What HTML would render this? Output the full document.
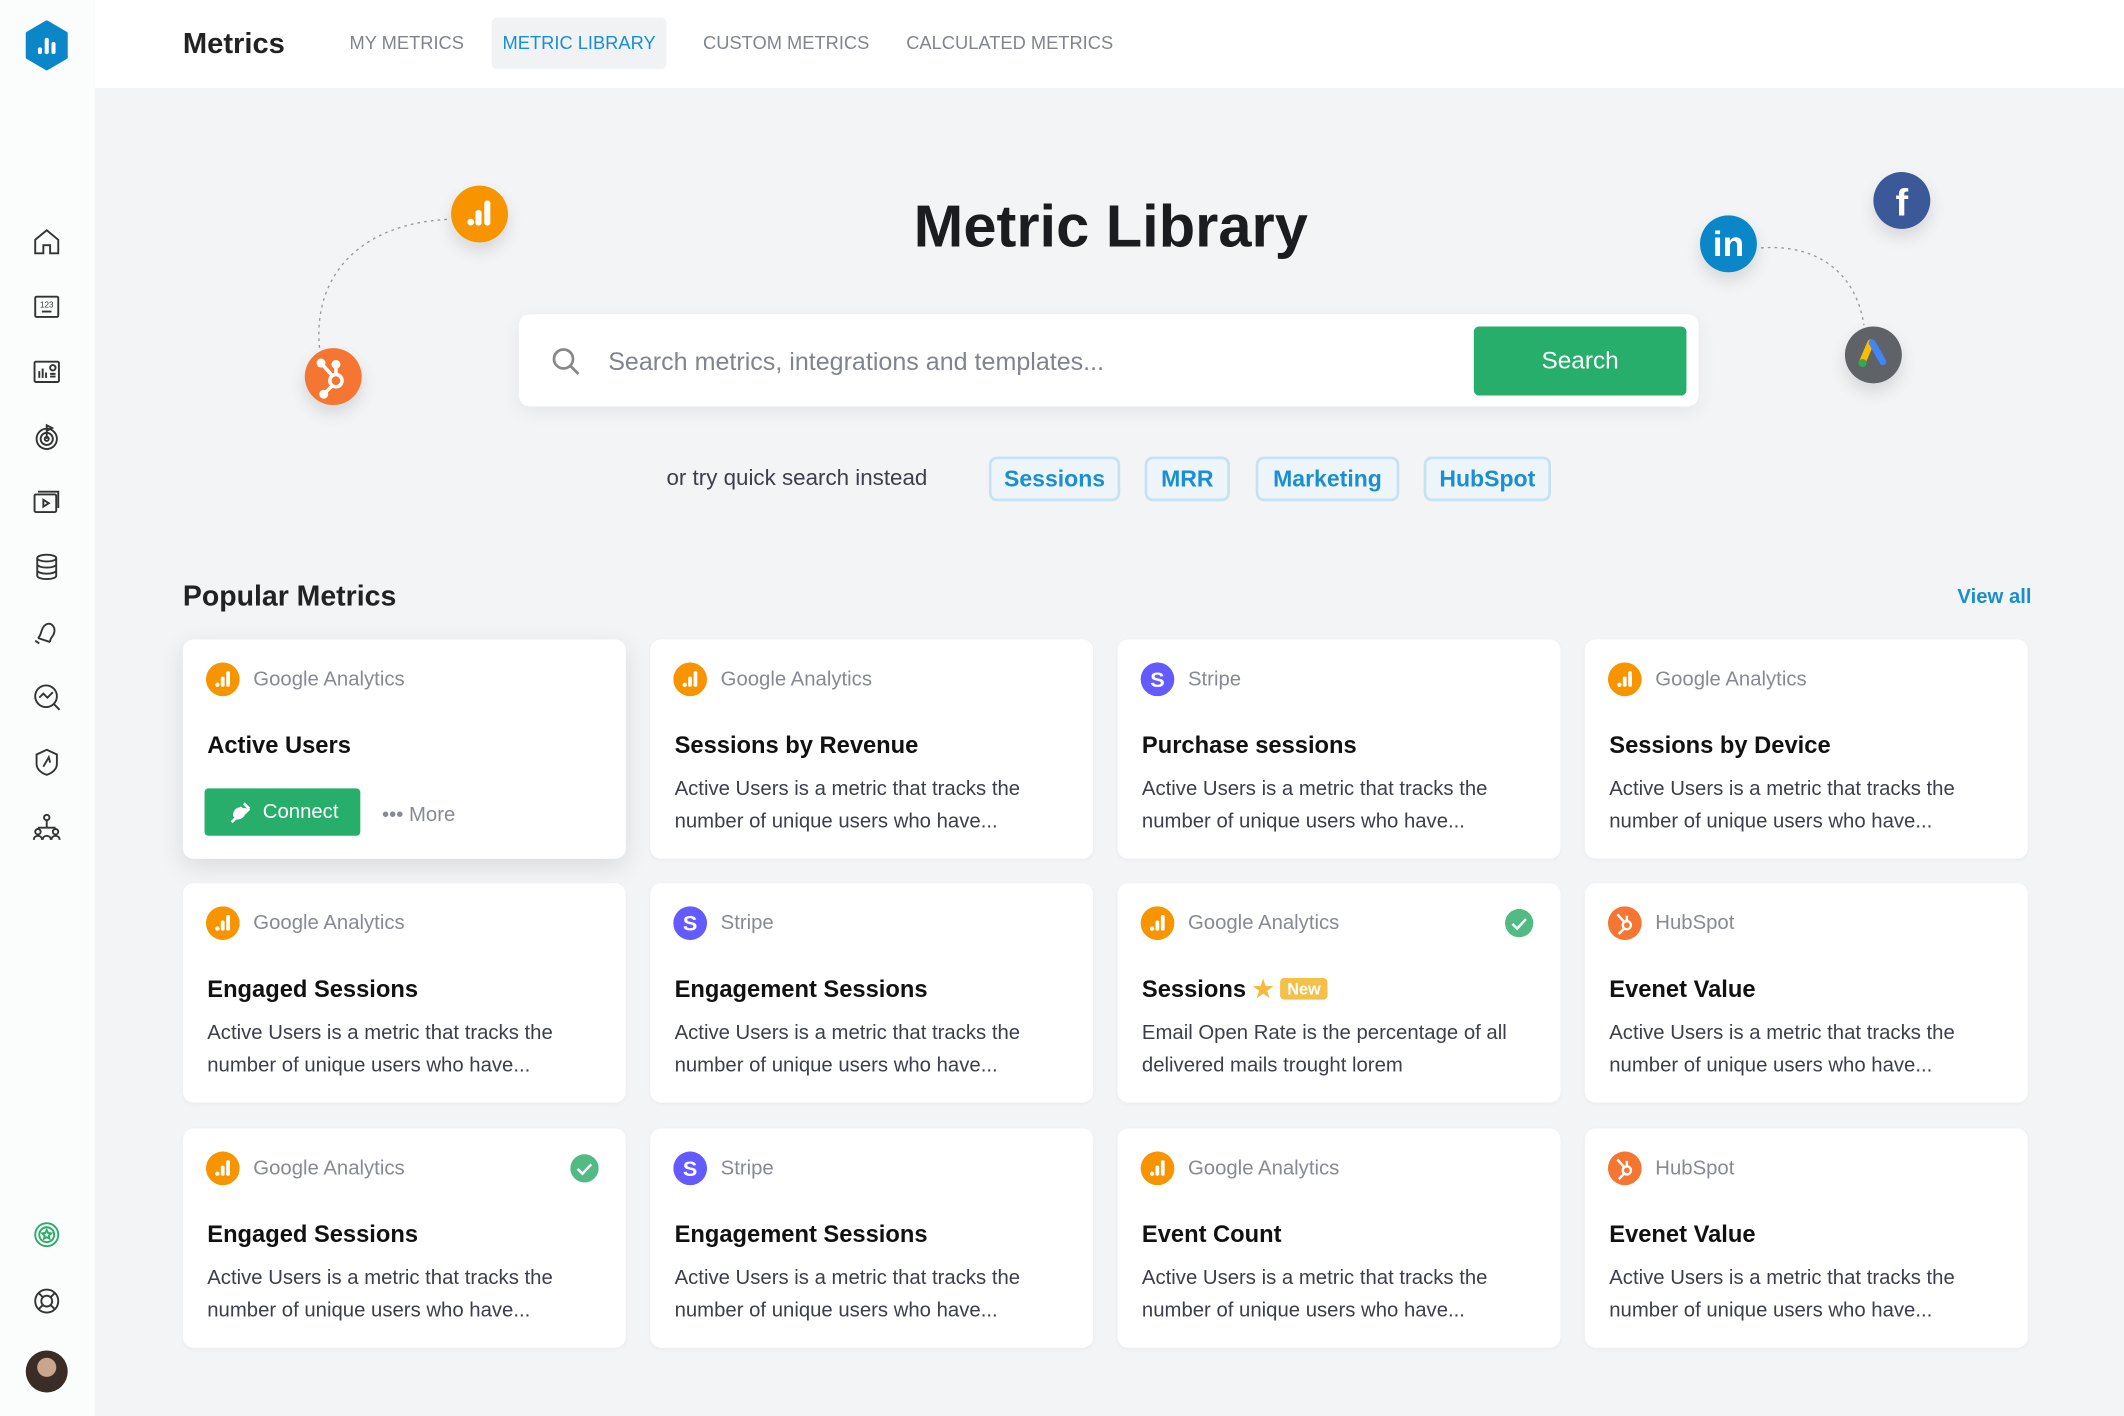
<!DOCTYPE html>
<html><head><meta charset="utf-8"><style>
*{box-sizing:border-box;margin:0;padding:0}
html,body{width:2124px;height:1416px;overflow:hidden;background:#fff}
#w{width:1568px;height:1046px;transform:scale(1.35459);transform-origin:0 0;position:relative;font-family:"Liberation Sans",Arial,sans-serif;background:#f3f4f6}
.abs{position:absolute}
#side{left:0;top:0;width:70px;height:1046px;background:#fbfcfc}
#head{left:70px;top:0;width:1498px;height:65px;background:#fff}
.tab{position:absolute;top:24px;font-size:13.5px;color:#80848c;letter-spacing:0}
.ic{position:absolute;left:24px;width:21px;height:21px}
.card{position:absolute;width:327px;height:162px;background:#fff;border-radius:8px;box-shadow:0 1px 3px rgba(0,0,0,.04)}
.src{position:absolute;left:52px;top:21px;font-size:15px;color:#878a92}
.ttl{position:absolute;left:18px;top:68px;font-size:17.5px;font-weight:bold;color:#111}
.dsc{position:absolute;left:18px;top:99px;font-size:15px;color:#3c3f4a;line-height:24px}
.lg{position:absolute;left:17px;top:17px;width:25px;height:25px;border-radius:50%}
.chip{position:absolute;top:337px;height:33px;border:2px solid #c6e2f1;background:#eef5fa;border-radius:6px;color:#1a8fd0;font-weight:bold;font-size:17px;line-height:29px;text-align:center}
.chk{position:absolute;right:20px;top:19px;width:21px;height:21px;border-radius:50%;background:#52bb84}
</style></head><body><div id="w">
<div id="side" class="abs">
<svg class="abs" style="left:18px;top:15px" width="33" height="37" viewBox="0 0 33 37"><path d="M16.5 1 L31 9.5 V27.5 L16.5 36 L2 27.5 V9.5Z" fill="#0a86c9" stroke="#0a86c9" stroke-linejoin="round" stroke-width="2"/><rect x="10" y="20" width="3" height="5" rx="1.5" fill="#fff"/><rect x="15" y="13" width="3" height="12" rx="1.5" fill="#fff"/><rect x="20" y="16" width="3" height="9" rx="1.5" fill="#fff"/></svg>
<svg class="ic" style="top:168px" viewBox="0 0 21 21" fill="none" stroke="#333" stroke-width="1.4"><path d="M2 9 L10.5 2 L19 9 V19 H13 V13 H8 V19 H2Z"/></svg>
<svg class="ic" style="top:216px" viewBox="0 0 21 21" fill="none" stroke="#333" stroke-width="1.4"><rect x="2" y="3" width="17" height="15" rx="1"/><text x="10.5" y="11" font-size="6" text-anchor="middle" fill="#333" stroke="none" font-family="Liberation Sans">123</text><path d="M7 14h7"/></svg>
<svg class="ic" style="top:264px" viewBox="0 0 21 21" fill="none" stroke="#333" stroke-width="1.4"><rect x="1.5" y="3" width="18" height="15" rx="1"/><path d="M5 15V10M7.5 15V8M10 15V11M13 14h4M13 12h4"/><circle cx="15" cy="7.5" r="2"/></svg>
<svg class="ic" style="top:312px" viewBox="0 0 21 21" fill="none" stroke="#333" stroke-width="1.4"><circle cx="10.5" cy="12" r="7.5"/><circle cx="10.5" cy="12" r="4.5"/><circle cx="10.5" cy="12" r="1.5"/><path d="M10.5 12V2l4 2-4 2"/></svg>
<svg class="ic" style="top:360px" viewBox="0 0 21 21" fill="none" stroke="#333" stroke-width="1.4"><rect x="1.5" y="5" width="16" height="13" rx="1"/><path d="M4 3h15v12"/><path d="M8 9l4 2.5-4 2.5z"/></svg>
<svg class="ic" style="top:408px" viewBox="0 0 21 21" fill="none" stroke="#333" stroke-width="1.4"><ellipse cx="10.5" cy="4" rx="7" ry="2.5"/><path d="M3.5 4v13c0 1.4 3 2.5 7 2.5s7-1.1 7-2.5V4M3.5 8.5c0 1.4 3 2.5 7 2.5s7-1.1 7-2.5M3.5 13c0 1.4 3 2.5 7 2.5s7-1.1 7-2.5"/></svg>
<svg class="ic" style="top:456px" viewBox="0 0 21 21" fill="none" stroke="#333" stroke-width="1.4"><path d="M4 15c3-2 2-8 6-10s7 2 6 6-3 3-3 7M4 15l9 3M2 17l3 2"/></svg>
<svg class="ic" style="top:504px" viewBox="0 0 21 21" fill="none" stroke="#333" stroke-width="1.4"><circle cx="10" cy="10" r="8"/><path d="M15.5 15.5L20 20M5 11l3-3 3 3 4-4"/></svg>
<svg class="ic" style="top:552px" viewBox="0 0 21 21" fill="none" stroke="#333" stroke-width="1.4"><path d="M10.5 1.5L18 5v7c0 4-4 7-7.5 8C7 19 3 16 3 12V5z"/><path d="M8 14l4-7 1 4"/></svg>
<svg class="ic" style="top:600px" viewBox="0 0 21 21" fill="none" stroke="#333" stroke-width="1.4"><circle cx="10.5" cy="3.5" r="2"/><circle cx="4" cy="14" r="2"/><circle cx="17" cy="14" r="2"/><path d="M10.5 6v5M4 11h13M1 20c0-2 1.5-3 3-3s3 1 3 3M14 20c0-2 1.5-3 3-3s3 1 3 3M7.5 20c0-2 1.5-3 3-3s3 1 3 3"/></svg>
<svg class="ic" style="top:901px" viewBox="0 0 21 21" fill="none" stroke="#27ae6a" stroke-width="1.4"><circle cx="10.5" cy="10.5" r="8.5"/><circle cx="10.5" cy="10.5" r="5.5"/><path d="M10.5 7l1 2.2 2.3.3-1.7 1.6.4 2.3-2-1.1-2 1.1.4-2.3-1.7-1.6 2.3-.3z"/></svg>
<svg class="ic" style="top:950px" viewBox="0 0 21 21" fill="none" stroke="#333" stroke-width="1.4"><circle cx="10.5" cy="10.5" r="8.5"/><circle cx="10.5" cy="10.5" r="4"/><path d="M4.5 4.5l3 3M16.5 4.5l-3 3M4.5 16.5l3-3M16.5 16.5l-3-3"/></svg>
<div class="abs" style="left:19px;top:997px;width:31px;height:31px;border-radius:50%;background:radial-gradient(circle at 50% 40%,#c9a58e 0 28%,#3a2c26 30% 100%)"></div>
</div>
<div id="head" class="abs">
<div class="abs" style="left:65px;top:20px;font-size:21.5px;color:#222;font-weight:600">Metrics</div>
<div class="tab" style="left:188px">MY METRICS</div>
<div class="abs" style="left:293px;top:13px;width:129px;height:38px;background:#f0f2f4;border-radius:4px"></div>
<div class="tab" style="left:301px;color:#1a8fd0">METRIC LIBRARY</div>
<div class="tab" style="left:449px">CUSTOM METRICS</div>
<div class="tab" style="left:599px">CALCULATED METRICS</div>
</div>
<svg class="abs" style="left:0;top:0" width="1568" height="400" fill="none"><path d="M330 162 C270 165 230 200 236 258" stroke="#999" stroke-dasharray="2 3"/><path d="M1300 183 C1340 180 1370 200 1376 240" stroke="#999" stroke-dasharray="2 3"/></svg>
<div class="abs" style="left:333px;top:137px;width:42px;height:42px;border-radius:50%;background:#f79400;box-shadow:0 6px 12px rgba(0,0,0,.12)"><svg width="42" height="42"><circle cx="14.5" cy="27" r="2.5" fill="#fff"/><rect x="18" y="18" width="4.5" height="11.5" rx="2" fill="#fff"/><rect x="24.5" y="11" width="4.5" height="18.5" rx="2" fill="#fff"/></svg></div>
<div class="abs" style="left:225px;top:257px;width:42px;height:42px;border-radius:50%;background:#f47632;box-shadow:0 6px 12px rgba(0,0,0,.12)"><svg width="42" height="42" fill="none" stroke="#fff" stroke-width="2.6"><circle cx="23" cy="24" r="4.5"/><path d="M12 11l8 9M23 19v-7M20 28l-6 6"/><circle cx="12" cy="11" r="2" fill="#fff"/><circle cx="23" cy="12" r="2" fill="#fff"/><circle cx="14" cy="34" r="2" fill="#fff"/></svg></div>
<div class="abs" style="left:1255px;top:159px;width:42px;height:42px;border-radius:50%;background:#0a86c9;box-shadow:0 6px 12px rgba(0,0,0,.12);color:#fff;font-weight:bold;font-size:26px;text-align:center;line-height:42px">in</div>
<div class="abs" style="left:1383px;top:127px;width:42px;height:42px;border-radius:50%;background:#3b5998;box-shadow:0 6px 12px rgba(0,0,0,.12);color:#fff;font-weight:bold;font-size:28px;text-align:center;line-height:46px">f</div>
<div class="abs" style="left:1362px;top:241px;width:42px;height:42px;border-radius:50%;background:#5f6368;box-shadow:0 6px 12px rgba(0,0,0,.12)"><svg width="42" height="42"><path d="M19 12l-6 14" stroke="#fbbc04" stroke-width="5" stroke-linecap="round"/><path d="M20 12l8 14" stroke="#4285f4" stroke-width="5" stroke-linecap="round"/><circle cx="13" cy="27" r="3" fill="#34a853"/></svg></div>
<div class="abs" style="left:0;width:1640px;top:143px;text-align:center;font-size:44px;font-weight:bold;color:#1b1c20">Metric Library</div>
<div class="abs" style="left:383px;top:232px;width:871px;height:68px;background:#fff;border-radius:8px;box-shadow:0 4px 14px rgba(0,0,0,.06)">
<svg class="abs" style="left:24px;top:24px" width="22" height="22" fill="none" stroke="#888" stroke-width="2"><circle cx="9" cy="9" r="7"/><path d="M14 14l6 6"/></svg>
<div class="abs" style="left:66px;top:24px;font-size:18.5px;color:#80848c">Search metrics, integrations and templates...</div>
<div class="abs" style="left:705px;top:9px;width:157px;height:51px;background:#27ae6a;border-radius:4px;color:#fff;font-size:18px;text-align:center;line-height:51px">Search</div>
</div>
<div class="abs" style="left:492px;top:344px;font-size:16.5px;color:#3c3f4a">or try quick search instead</div>
<div class="chip" style="left:730px;width:97px">Sessions</div>
<div class="chip" style="left:845px;width:63px">MRR</div>
<div class="chip" style="left:927px;width:106px">Marketing</div>
<div class="chip" style="left:1051px;width:94px">HubSpot</div>
<div class="abs" style="left:135px;top:429px;font-size:21px;font-weight:bold;color:#222">Popular Metrics</div>
<div class="abs" style="left:1445px;top:432px;font-size:15px;font-weight:bold;color:#1a8fd0">View all</div>
<svg width="0" height="0" style="position:absolute"><defs>
<symbol id="ga" viewBox="0 0 25 25"><circle cx="12.5" cy="12.5" r="12.5" fill="#f79400"/><circle cx="8.5" cy="16.5" r="1.6" fill="#fff"/><rect x="11" y="10.5" width="2.8" height="7.5" rx="1.2" fill="#fff"/><rect x="15" y="6.5" width="2.8" height="11.5" rx="1.2" fill="#fff"/></symbol>
<symbol id="st" viewBox="0 0 25 25"><circle cx="12.5" cy="12.5" r="12.5" fill="#635bff"/><text x="12.5" y="18" font-size="16" font-weight="bold" text-anchor="middle" fill="#fff" font-family="Liberation Sans">S</text></symbol>
<symbol id="hs" viewBox="0 0 25 25"><circle cx="12.5" cy="12.5" r="12.5" fill="#f47632"/><g fill="none" stroke="#fff" stroke-width="1.8"><circle cx="14" cy="14" r="3"/><path d="M7 6l5 5.5M14 11V7M12 16.5l-4 4"/></g></symbol>
<symbol id="ck" viewBox="0 0 21 21"><circle cx="10.5" cy="10.5" r="10.5" fill="#52bb84"/><path d="M5.5 11l3.5 3.5 6.5-7" fill="none" stroke="#fff" stroke-width="1.8"/></symbol>
</defs></svg>

<div class="card" style="left:135px;top:472px;box-shadow:0 6px 18px rgba(0,0,0,.1)"><svg class="lg"><use href="#ga"/></svg><div class="src">Google Analytics</div><div class="ttl">Active Users</div>
<div class="abs" style="left:16px;top:110px;width:115px;height:35px;background:#27ae6a;border-radius:3px;color:#fff;font-size:15px;line-height:35px;padding-left:43px">Connect</div>
<svg class="abs" style="left:33px;top:119px" width="18" height="18"><path d="M3 16l3-3M6 8l4 4M9 5l4 4 3-3M12 2l4 4M5 11c0-3 2-5 4-5l3 3c0 2-2 4-5 4z" stroke="#fff" stroke-width="2" fill="#fff"/></svg>
<div class="abs" style="left:147px;top:121px;font-size:15px;color:#878a92">••• More</div></div>

<div class="card" style="left:480px;top:472px"><svg class="lg"><use href="#ga"/></svg><div class="src">Google Analytics</div><div class="ttl">Sessions by Revenue</div><div class="dsc">Active Users is a metric that tracks the<br>number of unique users who have...</div></div>
<div class="card" style="left:825px;top:472px"><svg class="lg"><use href="#st"/></svg><div class="src">Stripe</div><div class="ttl">Purchase sessions</div><div class="dsc">Active Users is a metric that tracks the<br>number of unique users who have...</div></div>
<div class="card" style="left:1170px;top:472px"><svg class="lg"><use href="#ga"/></svg><div class="src">Google Analytics</div><div class="ttl">Sessions by Device</div><div class="dsc">Active Users is a metric that tracks the<br>number of unique users who have...</div></div>

<div class="card" style="left:135px;top:652px"><svg class="lg"><use href="#ga"/></svg><div class="src">Google Analytics</div><div class="ttl">Engaged Sessions</div><div class="dsc">Active Users is a metric that tracks the<br>number of unique users who have...</div></div>
<div class="card" style="left:480px;top:652px"><svg class="lg"><use href="#st"/></svg><div class="src">Stripe</div><div class="ttl">Engagement Sessions</div><div class="dsc">Active Users is a metric that tracks the<br>number of unique users who have...</div></div>
<div class="card" style="left:825px;top:652px"><svg class="lg"><use href="#ga"/></svg><div class="src">Google Analytics</div><svg class="chk" style="background:none"><use href="#ck"/></svg><div class="ttl">Sessions <span style="color:#f5b93b">★</span> <span style="display:inline-block;background:#f5c04a;color:#fff;font-size:12px;padding:1px 5px;border-radius:3px;vertical-align:2px">New</span></div><div class="dsc">Email Open Rate is the percentage of all<br>delivered mails trought lorem</div></div>
<div class="card" style="left:1170px;top:652px"><svg class="lg"><use href="#hs"/></svg><div class="src">HubSpot</div><div class="ttl">Evenet Value</div><div class="dsc">Active Users is a metric that tracks the<br>number of unique users who have...</div></div>

<div class="card" style="left:135px;top:833px"><svg class="lg"><use href="#ga"/></svg><div class="src">Google Analytics</div><svg class="chk" style="background:none"><use href="#ck"/></svg><div class="ttl">Engaged Sessions</div><div class="dsc">Active Users is a metric that tracks the<br>number of unique users who have...</div></div>
<div class="card" style="left:480px;top:833px"><svg class="lg"><use href="#st"/></svg><div class="src">Stripe</div><div class="ttl">Engagement Sessions</div><div class="dsc">Active Users is a metric that tracks the<br>number of unique users who have...</div></div>
<div class="card" style="left:825px;top:833px"><svg class="lg"><use href="#ga"/></svg><div class="src">Google Analytics</div><div class="ttl">Event Count</div><div class="dsc">Active Users is a metric that tracks the<br>number of unique users who have...</div></div>
<div class="card" style="left:1170px;top:833px"><svg class="lg"><use href="#hs"/></svg><div class="src">HubSpot</div><div class="ttl">Evenet Value</div><div class="dsc">Active Users is a metric that tracks the<br>number of unique users who have...</div></div>
</div></body></html>
